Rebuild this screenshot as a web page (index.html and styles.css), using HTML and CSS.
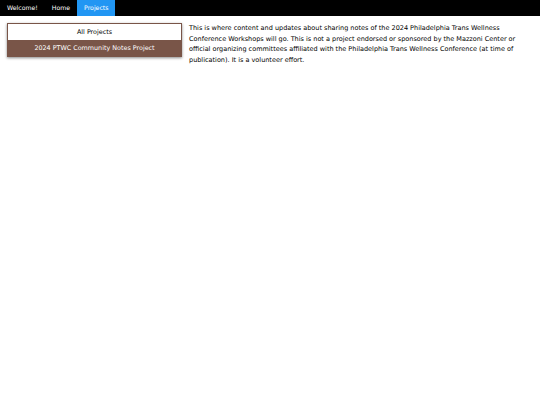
FILE: index.html
```html
<!DOCTYPE html>
<html>
<head>
<meta charset="utf-8">
<link rel="stylesheet" href="styles.css">
</head>
<body>
<nav class="bar">
  <a class="bar-item">Welcome!</a>
  <a class="bar-item">Home</a>
  <a class="bar-item active">Projects</a>
</nav>
<div class="main">
  <div class="side">
    <div class="side-item">All Projects</div>
    <div class="side-item current">2024 PTWC Community Notes Project</div>
  </div>
  <p class="content">This is where content and updates about sharing notes of the 2024 Philadelphia Trans Wellness Conference Workshops will go. This is not a project endorsed or sponsored by the Mazzoni Center or official organizing committees affiliated with the Philadelphia Trans Wellness Conference (at time of publication). It is a volunteer effort.</p>
</div>
</body>
</html>
```
FILE: styles.css
```css
html, body {
  margin: 0;
  padding: 0;
  background: #fff;
  font-family: "DejaVu Sans", Verdana, sans-serif;
  font-size: 7px;
  line-height: 1.5;
  color: #000;
}
.bar {
  display: flex;
  background: #000;
  height: 16px;
  font-size: 6.2px;
}
.bar-item {
  color: #fff;
  padding: 0 7px;
  line-height: 16px;
}
.bar-item.active {
  background: #2196f3;
}
.main {
  display: flex;
  align-items: flex-start;
  padding: 7px 7px 0 7px;
  gap: 7px;
}
.side {
  width: 175px;
  flex: none;
  font-size: 6.4px;
  box-shadow: 0 1px 3px rgba(0,0,0,0.3), 0 1px 2px rgba(0,0,0,0.2);
}
.side-item {
  text-align: center;
  height: 17px;
  line-height: 17px;
}
.side-item:first-child {
  border: 1px solid #795548;
  border-bottom: none;
  height: 16px;
  line-height: 16px;
}
.side-item.current {
  background: #795548;
  color: #fff;
}
.content {
  margin: 0;
  padding-top: 0;
  max-width: 330px;
  font-size: 6.5px;
  line-height: 10.5px;
}
```
